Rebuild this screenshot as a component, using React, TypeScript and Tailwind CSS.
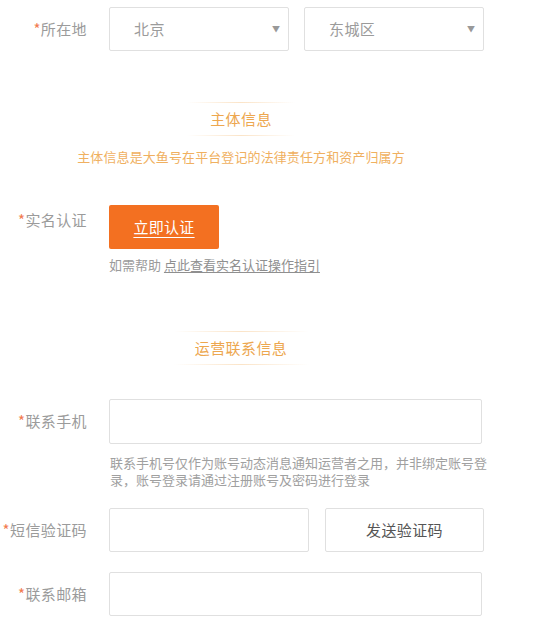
import React from "react";

const font = { fontFamily: '"Noto Sans CJK SC", "Noto Sans", sans-serif' };

function Label({ text }: { text: string }) {
  return (
    <div className="w-[87px] shrink-0 text-right text-[15px] tracking-[0.4px] text-[#9b9b9b] whitespace-nowrap">
      <span className="text-[#f27a50]">*</span>
      {text}
    </div>
  );
}

function Select({ value }: { value: string }) {
  return (
    <div className="flex h-[44px] w-[180px] items-center justify-between rounded-[2px] border border-[#e0e0e0] pl-[24px] pr-[8px]">
      <span className="text-[15px] tracking-[0.4px] text-[#9b9b9b]">{value}</span>
      <span className="text-[8px] text-[#999]">▼</span>
    </div>
  );
}

function SectionTitle({ text, width }: { text: string; width: string }) {
  return (
    <div className={`mx-auto flex flex-col ${width}`}>
      <div className="h-px bg-linear-to-r from-transparent via-[#fbe4c8] to-transparent" />
      <div className="flex h-[32px] items-center justify-center text-[15px] tracking-[0.4px] text-[#eda74f]">{text}</div>
      <div className="h-px bg-linear-to-r from-transparent via-[#fbe4c8] to-transparent" />
    </div>
  );
}

export default function App() {
  return (
    <div className="h-[630px] w-[549px] overflow-hidden bg-white" style={font}>
      <div className="w-[482px]">
        {/* 所在地 */}
        <div className="mt-[7px] flex items-center">
          <Label text="所在地" />
          <div className="ml-[22px] flex gap-[15px]">
            <Select value="北京" />
            <Select value="东城区" />
          </div>
        </div>

        {/* 主体信息 */}
        <div className="mt-[51px]">
          <SectionTitle text="主体信息" width="w-[108px]" />
        </div>
        <div className="mt-[12px] text-center text-[13px] tracking-[0.1px] leading-[18px] text-[#f0b060]">
          主体信息是大鱼号在平台登记的法律责任方和资产归属方
        </div>

        {/* 实名认证 */}
        <div className="mt-[39px] flex items-start">
          <div className="h-[30px] leading-[30px]">
            <Label text="实名认证" />
          </div>
          <div className="ml-[22px] flex flex-col">
            <button className="flex h-[44px] w-[110px] items-center justify-center rounded-[2px] bg-[#f37021] text-[15px] tracking-[0.3px] text-white underline decoration-1 underline-offset-[4px]">
              立即认证
            </button>
            <div className="mt-[7px] text-[13px] leading-[18px] text-[#9b9b9b] whitespace-nowrap">
              如需帮助 <span className="text-[#8f8f8f] underline underline-offset-[2px]">点此查看实名认证操作指引</span>
            </div>
          </div>
        </div>

        {/* 运营联系信息 */}
        <div className="mt-[57px]">
          <SectionTitle text="运营联系信息" width="w-[135px]" />
        </div>

        {/* 联系手机 */}
        <div className="mt-[34px] flex items-center">
          <Label text="联系手机" />
          <div className="ml-[22px] h-[45px] w-[375px] rounded-[2px] border border-[#e0e0e0]" />
        </div>
        <div className="ml-[110px] mt-[10px] w-[386px] text-[13px] leading-[17px] text-[#a0a0a0]">
          联系手机号仅作为账号动态消息通知运营者之用，并非绑定账号登录，账号登录请通过注册账号及密码进行登录
        </div>

        {/* 短信验证码 */}
        <div className="mt-[20px] flex items-center">
          <Label text="短信验证码" />
          <div className="ml-[22px] flex items-center gap-[16px]">
            <div className="h-[44px] w-[200px] rounded-[2px] border border-[#e0e0e0]" />
            <button className="flex h-[44px] w-[159px] items-center justify-center rounded-[2px] border border-[#e0e0e0] bg-white text-[15px] tracking-[0.4px] text-[#555]">
              发送验证码
            </button>
          </div>
        </div>

        {/* 联系邮箱 */}
        <div className="mt-[20px] flex items-center">
          <Label text="联系邮箱" />
          <div className="ml-[22px] h-[44px] w-[374px] rounded-[2px] border border-[#e0e0e0]" />
        </div>
      </div>
    </div>
  );
}
